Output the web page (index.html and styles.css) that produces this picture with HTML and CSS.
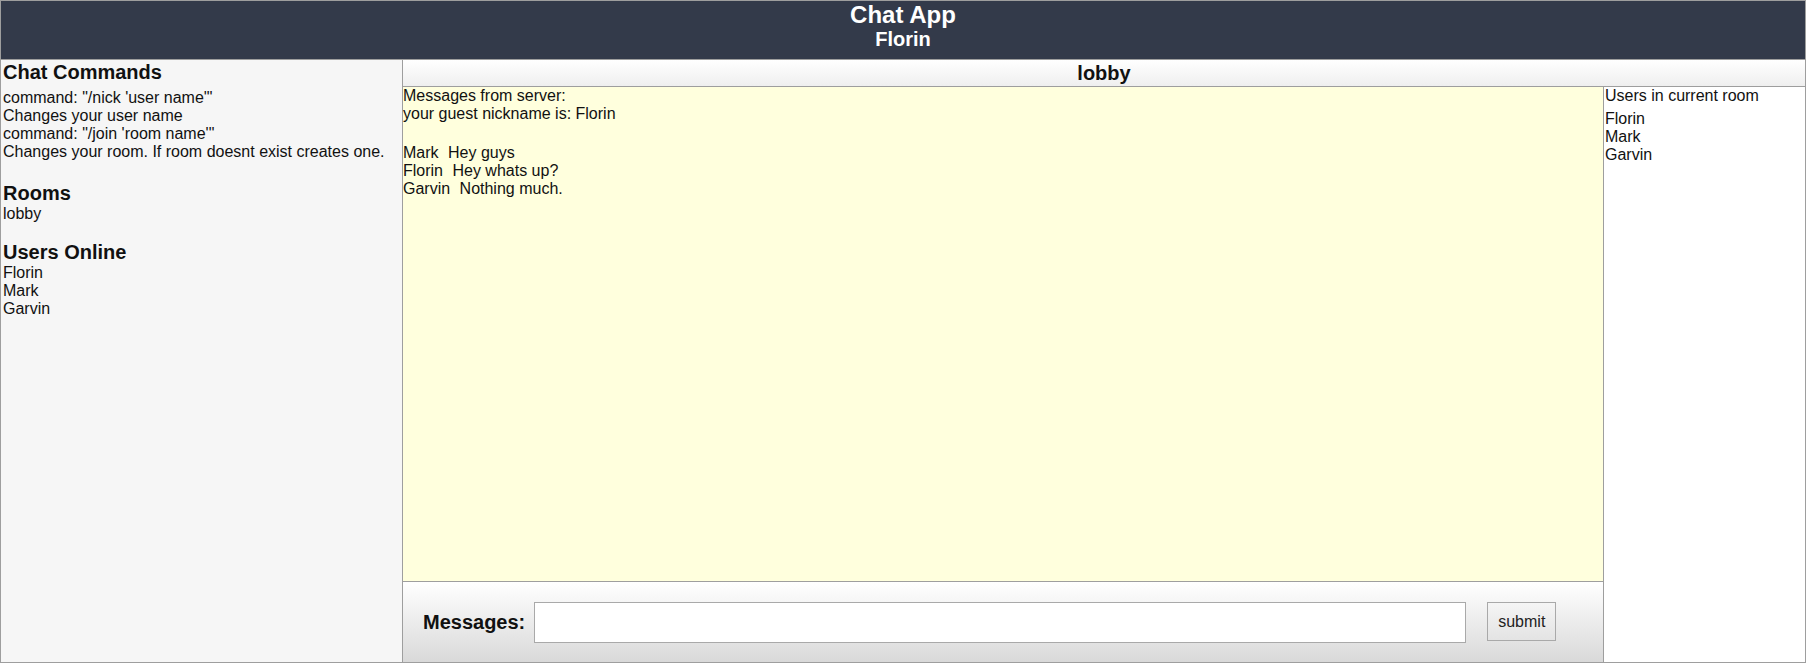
FILE: index.html
```html
<!DOCTYPE html>
<html lang="en">
<head>
<meta charset="utf-8">
<title>Chat App</title>
<link rel="stylesheet" href="styles.css">
</head>
<body>
<div class="app">
  <header class="top">
    <h1 class="app-title">Chat App</h1>
    <h2 class="app-user">Florin</h2>
  </header>
  <div class="layout">
    <aside class="sidebar">
      <section class="side-block side-block-first">
        <h3 class="side-title">Chat Commands</h3>
        <div class="commands">
          <div>command: "/nick 'user name'"</div>
          <div>Changes your user name</div>
          <div>command: "/join 'room name'"</div>
          <div>Changes your room. If room doesnt exist creates one.</div>
        </div>
      </section>
      <section class="side-block">
        <h3 class="side-title">Rooms</h3>
        <div>lobby</div>
      </section>
      <section class="side-block">
        <h3 class="side-title">Users Online</h3>
        <div>Florin</div>
        <div>Mark</div>
        <div>Garvin</div>
      </section>
    </aside>
    <section class="room">
      <h3 class="room-title">lobby</h3>
      <div class="room-body">
        <div class="chat">
          <div class="messages">
            <div>Messages from server:</div>
            <div>your guest nickname is: Florin</div>
            <div class="blank"></div>
            <div><span class="nick">Mark</span> Hey guys</div>
            <div><span class="nick">Florin</span> Hey whats up?</div>
            <div><span class="nick">Garvin</span> Nothing much.</div>
          </div>
          <form class="composer">
            <label class="composer-label" for="msg">Messages:</label>
            <input class="composer-input" id="msg" type="text">
            <button class="composer-btn" type="button">submit</button>
          </form>
        </div>
        <div class="room-users">
          <div class="room-users-title">Users in current room</div>
          <div class="room-users-list">
            <div>Florin</div>
            <div>Mark</div>
            <div>Garvin</div>
          </div>
        </div>
      </div>
    </section>
  </div>
</div>
</body>
</html>
```
FILE: styles.css
```css
* { box-sizing: border-box; }
html, body { margin: 0; padding: 0; }
body {
  font-family: "Liberation Sans", Arial, sans-serif;
  font-size: 16px;
  color: #111;
  background: #fff;
}
.app {
  width: 1806px;
  height: 663px;
  border: 1px solid #9e9e9e;
  display: flex;
  flex-direction: column;
}
.top {
  height: 59px;
  flex: 0 0 59px;
  background: #333a4a;
  color: #fff;
  text-align: center;
  border-bottom: 1px solid #9e9e9e;
}
.app-title {
  margin: 0;
  font-size: 24px;
  line-height: 27px;
  font-weight: bold;
}
.app-user {
  margin: 0;
  font-size: 20px;
  line-height: 23px;
  font-weight: bold;
}
.layout {
  flex: 1;
  display: flex;
  min-height: 0;
}
.sidebar {
  width: 402px;
  flex: 0 0 402px;
  background: #f6f6f6;
  border-right: 1px solid #9e9e9e;
  padding-left: 2px;
}
.side-block { margin-bottom: 18.4px; }
.side-block-first {
  padding-top: 1px;
  margin-bottom: 21px;
}
.side-title {
  margin: 0;
  font-size: 20px;
  line-height: 23px;
  font-weight: bold;
}
.commands { margin-top: 5px; }
.room {
  flex: 1;
  display: flex;
  flex-direction: column;
  min-width: 0;
}
.room-title {
  margin: 0;
  height: 27px;
  font-size: 20px;
  line-height: 26px;
  text-align: center;
  font-weight: bold;
  border-bottom: 1px solid #9e9e9e;
  background: linear-gradient(#ffffff, #efefef);
}
.room-body {
  flex: 1;
  display: flex;
  min-height: 0;
}
.chat {
  width: 1201px;
  flex: 0 0 1201px;
  display: flex;
  flex-direction: column;
  border-right: 1px solid #9e9e9e;
}
.messages {
  flex: 1;
  background: #ffffdd;
  border-bottom: 1px solid #9e9e9e;
}
.blank { height: 20.7px; }
.nick { margin-right: 5px; }
.composer {
  height: 80px;
  flex: 0 0 80px;
  margin: 0;
  display: flex;
  align-items: flex-start;
  padding: 20px 0 0 20px;
  background: linear-gradient(#ffffff, #d9d9d9);
}
.composer-label {
  font-size: 20px;
  line-height: 23px;
  font-weight: bold;
  margin-top: 9px;
  margin-right: 9px;
}
.composer-input {
  width: 932px;
  height: 41px;
  border: 1px solid #a9a9a9;
  background: #fff;
  margin: 0;
  font-family: inherit;
  font-size: 16px;
}
.composer-btn {
  width: 69px;
  height: 39px;
  margin: 0 0 0 21px;
  padding: 0;
  border: 1px solid #a9a9a9;
  background: transparent;
  font-family: inherit;
  font-size: 16px;
  color: #222;
}
.room-users {
  flex: 1;
  background: #fff;
  padding-left: 1px;
}
.room-users-list { margin-top: 4.6px; }
```
